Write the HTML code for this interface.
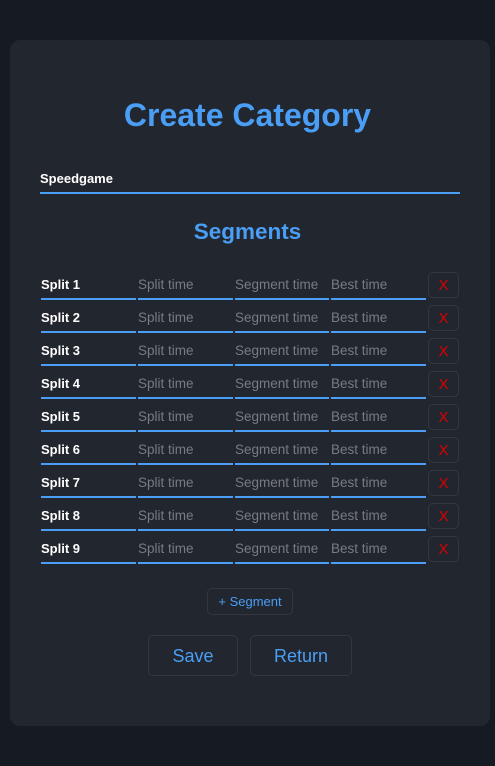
<!DOCTYPE html>
<html><head><style>
body{margin:0;background:#161a22;width:495px;height:766px;font-family:"Liberation Sans",sans-serif;position:relative;overflow:hidden}
.card{position:absolute;left:10px;top:40px;width:480px;height:686px;background:#22262e;border-radius:10px}
h1{position:absolute;left:0;right:0;top:95px;margin:0;text-align:center;color:#4a9ef5;font-size:32px;font-weight:bold;line-height:40px}
h2{position:absolute;left:0;right:0;top:218px;margin:0;text-align:center;color:#4a9ef5;font-size:22.5px;font-weight:bold;line-height:28px}
.name{position:absolute;left:40px;top:170px;width:420px;height:22px;border-bottom:2px solid #4a9ef5;color:#fff;font-size:13px;font-weight:bold;line-height:17px}
.row{position:absolute;left:41px;height:28px}
.f{position:absolute;top:0;height:26px;border-bottom:2px solid #4a9ef5;font-size:13.5px;line-height:26px;color:#777b82}
.f.n{color:#fff;font-weight:bold;font-size:13px}
.x{position:absolute;left:387px;top:0;width:29px;height:24px;border:1px solid #33373f;border-radius:5px;color:#d00;font-size:15px;text-align:center;line-height:25px}
.btn{position:absolute;border:1px solid #33373f;border-radius:5px;color:#4a9ef5;text-align:center}
</style></head><body>
<div class="card"></div>
<h1>Create Category</h1>
<div class="name">Speedgame</div>
<h2>Segments</h2>
<div class="row" style="top:272px"><div class="f n" style="left:0;width:95px">Split 1</div><div class="f" style="left:97px;width:95px">Split time</div><div class="f" style="left:194px;width:94px">Segment time</div><div class="f" style="left:290px;width:95px">Best time</div><div class="x">X</div></div>
<div class="row" style="top:305px"><div class="f n" style="left:0;width:95px">Split 2</div><div class="f" style="left:97px;width:95px">Split time</div><div class="f" style="left:194px;width:94px">Segment time</div><div class="f" style="left:290px;width:95px">Best time</div><div class="x">X</div></div>
<div class="row" style="top:338px"><div class="f n" style="left:0;width:95px">Split 3</div><div class="f" style="left:97px;width:95px">Split time</div><div class="f" style="left:194px;width:94px">Segment time</div><div class="f" style="left:290px;width:95px">Best time</div><div class="x">X</div></div>
<div class="row" style="top:371px"><div class="f n" style="left:0;width:95px">Split 4</div><div class="f" style="left:97px;width:95px">Split time</div><div class="f" style="left:194px;width:94px">Segment time</div><div class="f" style="left:290px;width:95px">Best time</div><div class="x">X</div></div>
<div class="row" style="top:404px"><div class="f n" style="left:0;width:95px">Split 5</div><div class="f" style="left:97px;width:95px">Split time</div><div class="f" style="left:194px;width:94px">Segment time</div><div class="f" style="left:290px;width:95px">Best time</div><div class="x">X</div></div>
<div class="row" style="top:437px"><div class="f n" style="left:0;width:95px">Split 6</div><div class="f" style="left:97px;width:95px">Split time</div><div class="f" style="left:194px;width:94px">Segment time</div><div class="f" style="left:290px;width:95px">Best time</div><div class="x">X</div></div>
<div class="row" style="top:470px"><div class="f n" style="left:0;width:95px">Split 7</div><div class="f" style="left:97px;width:95px">Split time</div><div class="f" style="left:194px;width:94px">Segment time</div><div class="f" style="left:290px;width:95px">Best time</div><div class="x">X</div></div>
<div class="row" style="top:503px"><div class="f n" style="left:0;width:95px">Split 8</div><div class="f" style="left:97px;width:95px">Split time</div><div class="f" style="left:194px;width:94px">Segment time</div><div class="f" style="left:290px;width:95px">Best time</div><div class="x">X</div></div>
<div class="row" style="top:536px"><div class="f n" style="left:0;width:95px">Split 9</div><div class="f" style="left:97px;width:95px">Split time</div><div class="f" style="left:194px;width:94px">Segment time</div><div class="f" style="left:290px;width:95px">Best time</div><div class="x">X</div></div>
<div class="btn" style="left:207px;top:588px;width:84px;height:25px;font-size:13px;line-height:26px">+ Segment</div>
<div class="btn" style="left:148px;top:635px;width:88px;height:39px;font-size:18px;line-height:40px">Save</div>
<div class="btn" style="left:250px;top:635px;width:100px;height:39px;font-size:18px;line-height:40px">Return</div>
</body></html>
